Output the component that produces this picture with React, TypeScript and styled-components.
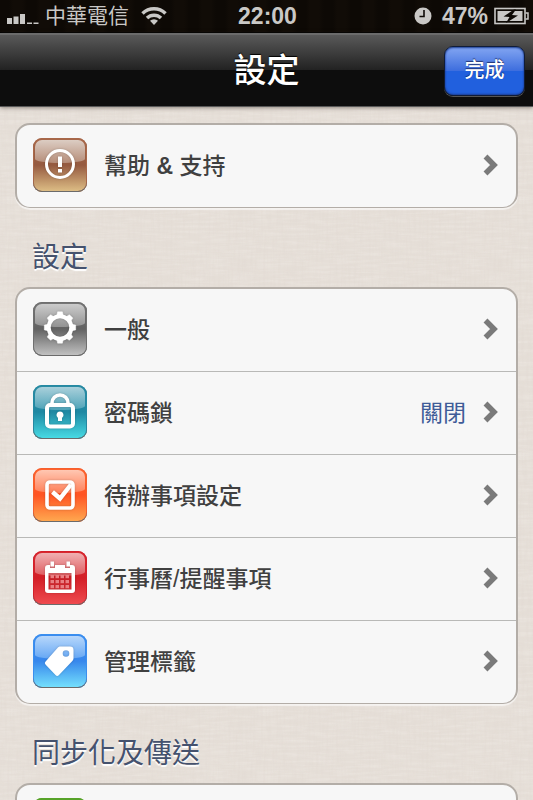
import React from "react";
import styled, { createGlobalStyle } from "styled-components";

const linen =
  "url(\"data:image/svg+xml,%3Csvg xmlns='http://www.w3.org/2000/svg' width='256' height='256'%3E" +
  "%3Cfilter id='h' x='0' y='0' width='1' height='1'%3E%3CfeTurbulence type='fractalNoise' baseFrequency='.04 .4' numOctaves='2' stitchTiles='stitch'/%3E%3CfeColorMatrix values='0 0 0 0 1 0 0 0 0 .98 0 0 0 0 .95 1.4 0 0 0 -.55'/%3E%3C/filter%3E" +
  "%3Cfilter id='v' x='0' y='0' width='1' height='1'%3E%3CfeTurbulence type='fractalNoise' baseFrequency='.4 .04' numOctaves='2' seed='4' stitchTiles='stitch'/%3E%3CfeColorMatrix values='0 0 0 0 .75 0 0 0 0 .69 0 0 0 0 .64 1.6 0 0 0 -.6'/%3E%3C/filter%3E" +
  "%3Crect width='256' height='256' filter='url(%23h)' opacity='.3'/%3E%3Crect width='256' height='256' filter='url(%23v)' opacity='.5'/%3E%3C/svg%3E\")";

const GlobalStyle = createGlobalStyle`
  * { box-sizing: border-box; }
  body {
    margin: 0;
    font-family: "Liberation Sans", "Noto Sans CJK TC", sans-serif;
    font-weight: 400;
  }
`;

const Screen = styled.div`
  display: flex;
  flex-direction: column;
  height: 100vh;
  background: #e5ded7 ${linen};
`;

const StatusBar = styled.div`
  display: grid;
  grid-template-columns: 1fr auto 1fr;
  align-items: center;
  height: 33px;
  flex: none;
  padding: 0 4px 0 6px;
  background: repeating-linear-gradient(90deg, #0d0905 0 9px, #110c07 13px 22px, #0d0905 27px);
  border-bottom: 1px solid #000;
  color: #c9c8c6;
`;

const StatusGroup = styled.div<{ $end?: boolean }>`
  display: flex;
  align-items: center;
  justify-content: ${(p) => (p.$end ? "flex-end" : "flex-start")};
`;

const Carrier = styled.span`
  margin: 0 12px 0 6px;
  font-size: 21px;
  line-height: 32px;
`;

const StatusText = styled.span`
  font-size: 23px;
  line-height: 32px;
  font-weight: 700;
`;

const Percent = styled(StatusText)`
  margin: 0 6px 0 10px;
`;

const Header = styled.header`
  display: grid;
  grid-template-columns: 1fr auto 1fr;
  align-items: center;
  flex: none;
  height: 74px;
  padding: 0 8px;
  border-top: 2px solid #6b6b6b;
  border-bottom: 1px solid #595959;
  background: linear-gradient(#595959, #212121 50%, #0d0d0d 50%, #0d0d0d);
  box-shadow: 0 1px 4px rgba(60, 50, 40, 0.5);
  z-index: 1;
`;

const Title = styled.h1`
  grid-column: 2;
  margin: 0;
  font-size: 33px;
  line-height: 40px;
  font-weight: 500;
  color: #fff;
  text-shadow: 0 -1px 1px #000;
`;

const DoneButton = styled.button`
  justify-self: end;
  width: 81px;
  height: 50px;
  padding: 0 0 4px;
  border: 1px solid #101c38;
  border-radius: 9px;
  background: linear-gradient(#83a6f2, #3e6ede 49%, #2160de 50%, #2160de);
  box-shadow: inset 0 1px 2px #1e3f93, inset 0 -1px 2px #1e3f93, 0 1px 0 #555;
  color: #fff;
  font: 500 20px "Liberation Sans", "Noto Sans CJK TC", sans-serif;
  text-shadow: 0 -1px 1px rgba(0, 0, 40, 0.6);
`;

const Content = styled.main`
  flex: 1;
  min-height: 0;
  overflow-y: auto;
  scrollbar-width: none;
  padding: 16px 15px;
`;

const Card = styled.nav`
  overflow: hidden;
  border: 2px solid #b3ada7;
  border-bottom-width: 1px;
  border-radius: 15px;
  background: #f7f7f7;
  box-shadow: 0 2px 1px rgba(255, 255, 255, 0.6);
`;

const SectionTitle = styled.h2`
  margin: 0;
  padding: 30px 17px 9px;
  font-size: 28px;
  line-height: 40px;
  font-weight: 400;
  color: #45526e;
  text-shadow: 0 2px 1px #fff;
`;

const Row = styled.a`
  display: flex;
  align-items: center;
  height: 83px;
  padding: 0 17px 2px 16px;
  border-bottom: 1px solid #b9b9b7;
  color: #404040;
  text-decoration: none;
  &:last-child {
    height: 82px;
    border-bottom: 0;
  }
`;

const Label = styled.span`
  flex: 1;
  padding: 2px 0 0 17px;
  font-size: 23px;
  line-height: 32px;
  font-weight: 500;
`;

const Value = styled.span`
  margin-right: 17px;
  padding-top: 2px;
  font-size: 23px;
  line-height: 32px;
  color: #3f5c98;
`;

const Tile = styled.span<{ $edge: string; $shine: string; $base: string }>`
  position: relative;
  display: block;
  flex: none;
  width: 54px;
  height: 54px;
  overflow: hidden;
  border-radius: 9px;
  background: linear-gradient(${(p) => p.$base});
  box-shadow: inset 0 -1px 0 #6b6b6b, inset 0 0 0 1px ${(p) => p.$edge};
  &::before {
    content: "";
    position: absolute;
    inset: 2px 2px 29px;
    border-radius: 7px 7px 50% 50% / 7px 7px 4px 4px;
    background: linear-gradient(${(p) => p.$shine});
  }
`;

const Glyph = styled.svg`
  position: absolute;
  inset: 0;
  filter: drop-shadow(0 0 1px rgba(0, 0, 0, 0.2));
`;

type IconName = "help" | "gear" | "lock" | "check" | "calendar" | "tag" | "sync";

const tones: Record<IconName, { edge: string; shine: string; base: string }> = {
  help: { edge: "#a8684a", shine: "#dccdc3, #b68d79", base: "#a8684a, #955a40 50%, #dfc087" },
  gear: { edge: "#707070", shine: "#cccccc, #929292", base: "#777, #626262 50%, #c4c4c4" },
  lock: { edge: "#2689a2", shine: "#a9d0db, #4ea3b8", base: "#2a8ca4, #1f88a2 50%, #48dde6" },
  check: { edge: "#f5602e", shine: "#ffc7b2, #ff8059", base: "#ff642f, #ff5423 50%, #ffaa50" },
  calendar: { edge: "#d4202a", shine: "#f0b0b2, #df5c60", base: "#d92a32, #d31f27 50%, #f04c50" },
  tag: { edge: "#3b8fee", shine: "#b7d7fb, #65a7f4", base: "#3a8cf0, #3787ec 50%, #76e2fd" },
  sync: { edge: "#57a329", shine: "#b8dba0, #7fbe58", base: "#57a329, #4e9d20 50%, #a8dc60" },
};

const drawings: Record<IconName, React.ReactNode> = {
  help: (
    <>
      <circle cx="27" cy="26" r="13.5" fill="none" stroke="#fff" strokeWidth="3" />
      <path d="M25 18.5h4v10.5h-4zM25 31h4v3.5h-4z" fill="#fff" />
    </>
  ),
  gear: (
    <g fill="none" stroke="#fff">
      <circle cx="27" cy="25.5" r="11.3" strokeWidth="4" />
      {[0, 45, 90, 135, 180, 225, 270, 315].map((a) => (
        <path key={a} d="M23.8 13.5 24.6 9.8h4.800l.8 3.7z" fill="#fff" strokeWidth="0.5" transform={`rotate(${a} 27 25.5)`} />
      ))}
    </g>
  ),
  lock: (
    <>
      <rect x="14" y="20" width="26" height="21.5" rx="3" fill="none" stroke="#fff" strokeWidth="4" />
      <path d="M19 20v-2a8 8 0 0 1 16 0v2" fill="none" stroke="#fff" strokeWidth="3.6" />
      <path d="M27 26.5a3.5 3.5 0 0 1 2 6.4V36h-4v-3.1a3.5 3.5 0 0 1 2-6.4z" fill="#fff" />
    </>
  ),
  check: (
    <g fill="none" stroke="#fff">
      <rect x="14" y="14" width="26" height="26" rx="3" strokeWidth="3.6" />
      <path d="M19.500 24l7.500 6.500 11-14" strokeWidth="4.4" />
    </g>
  ),
  calendar: (
    <>
      <path
        d="M15 14h2v3h5v-3h10v3h5v-3h2a3 3 0 0 1 3 3v22a3 3 0 0 1-3 3H15a3 3 0 0 1-3-3V17a3 3 0 0 1 3-3zM15.500 22v16.500h23V22z"
        fill="#fff"
        fillRule="evenodd"
      />
      <path d="M17.500 10.500h3.500v5h-3.500zM33.500 10.500h3.500v5h-3.500z" fill="#fff" />
      {[24, 29, 34].map((y) =>
        [17.5, 22.5, 27.5, 32.5].map((x) => (
          <rect key={`${x}-${y}`} x={x} y={y} width="3.5" height="3.2" fill="#ea7f82" />
        ))
      )}
    </>
  ),
  tag: (
    <path
      d="M27.500 12.500H37a3.500 3.500 0 0 1 3.500 3.500v8c0 1.500-.4 2.300-1.400 3.300L26 41c-1.200 1.200-2.300 1.200-3.500 0L12.700 30.800c-1.200-1.200-1.100-2.300.1-3.500L24.500 14c.9-1 1.600-1.500 3-1.500zM33 16.200a3.300 3.300 0 1 0 0 6.600 3.300 3.300 0 0 0 0-6.600z"
      fill="#fff"
      fillRule="evenodd"
    />
  ),
  sync: null,
};

function AppIcon({ name }: { name: IconName }) {
  const t = tones[name];
  return (
    <Tile $edge={t.edge} $shine={t.shine} $base={t.base}>
      <Glyph width="54" height="54" viewBox="0 0 54 54" aria-hidden="true">
        {drawings[name]}
      </Glyph>
    </Tile>
  );
}

function Chevron() {
  return (
    <svg width="16" height="22" viewBox="0 0 16 22" aria-hidden="true">
      <path d="M2.500 2.500 11 11l-8.500 8.500" fill="none" stroke="#7a7a7a" strokeWidth="5.500" />
    </svg>
  );
}

const settings: { icon: IconName; label: string; value?: string }[] = [
  { icon: "gear", label: "一般" },
  { icon: "lock", label: "密碼鎖", value: "關閉" },
  { icon: "check", label: "待辦事項設定" },
  { icon: "calendar", label: "行事曆/提醒事項" },
  { icon: "tag", label: "管理標籤" },
];

export default function App() {
  return (
    <Screen lang="zh-Hant">
      <GlobalStyle />
      <StatusBar>
        <StatusGroup>
          <svg width="33" height="20" viewBox="0 0 33 20" fill="#c9c8c6" aria-hidden="true">
            <path d="M1 12h5v6H1zM7.500 10.500h5V18h-5zM14 8h5v10h-5zM21 16.500h5V18h-5zM27.500 16.500h5V18h-5z" />
          </svg>
          <Carrier>中華電信</Carrier>
          <svg width="26" height="20" viewBox="0 0 26 20" fill="none" stroke="#c9c8c6" strokeWidth="3.500" aria-hidden="true">
            <path d="M1.500 7.500a16.500 16.500 0 0 1 23 0M6 12a10 10 0 0 1 14 0" />
            <path d="M9 14.800a5.800 5.800 0 0 1 8 0L13 19z" fill="#c9c8c6" stroke="none" />
          </svg>
        </StatusGroup>
        <StatusText>22:00</StatusText>
        <StatusGroup $end>
          <svg width="18" height="18" viewBox="0 0 18 18" aria-hidden="true">
            <circle cx="9" cy="9" r="8.500" fill="#c9c8c6" />
            <path d="M10 3v6.500H5.500" fill="none" stroke="#0d0905" strokeWidth="1.600" />
          </svg>
          <Percent>47%</Percent>
          <svg width="35" height="18" viewBox="0 0 35 18" aria-hidden="true">
            <rect x="1" y="1.500" width="30" height="15" fill="none" stroke="#c9c8c6" strokeWidth="1.600" />
            <path d="M3.500 4h25v10h-25z" fill="#c9c8c6" />
            <path d="M31.500 6H34v6h-2.500" fill="none" stroke="#c9c8c6" strokeWidth="1.500" />
            <path d="M20 2.500 9.500 9.500l6 .5-3.500 6 12-7.500-6-.5 4-5.500z" fill="#0d0905" />
          </svg>
        </StatusGroup>
      </StatusBar>
      <Header>
        <Title>設定</Title>
        <DoneButton type="button">完成</DoneButton>
      </Header>
      <Content>
        <Card>
          <Row href="#help">
            <AppIcon name="help" />
            <Label>
              幫助 <b>&amp;</b> 支持
            </Label>
            <Chevron />
          </Row>
        </Card>
        <SectionTitle>設定</SectionTitle>
        <Card>
          {settings.map((s) => (
            <Row key={s.icon} href={`#${s.icon}`}>
              <AppIcon name={s.icon} />
              <Label>{s.label}</Label>
              {s.value && <Value>{s.value}</Value>}
              <Chevron />
            </Row>
          ))}
        </Card>
        <SectionTitle>同步化及傳送</SectionTitle>
        <Card>
          <Row href="#sync">
            <AppIcon name="sync" />
          </Row>
        </Card>
      </Content>
    </Screen>
  );
}
